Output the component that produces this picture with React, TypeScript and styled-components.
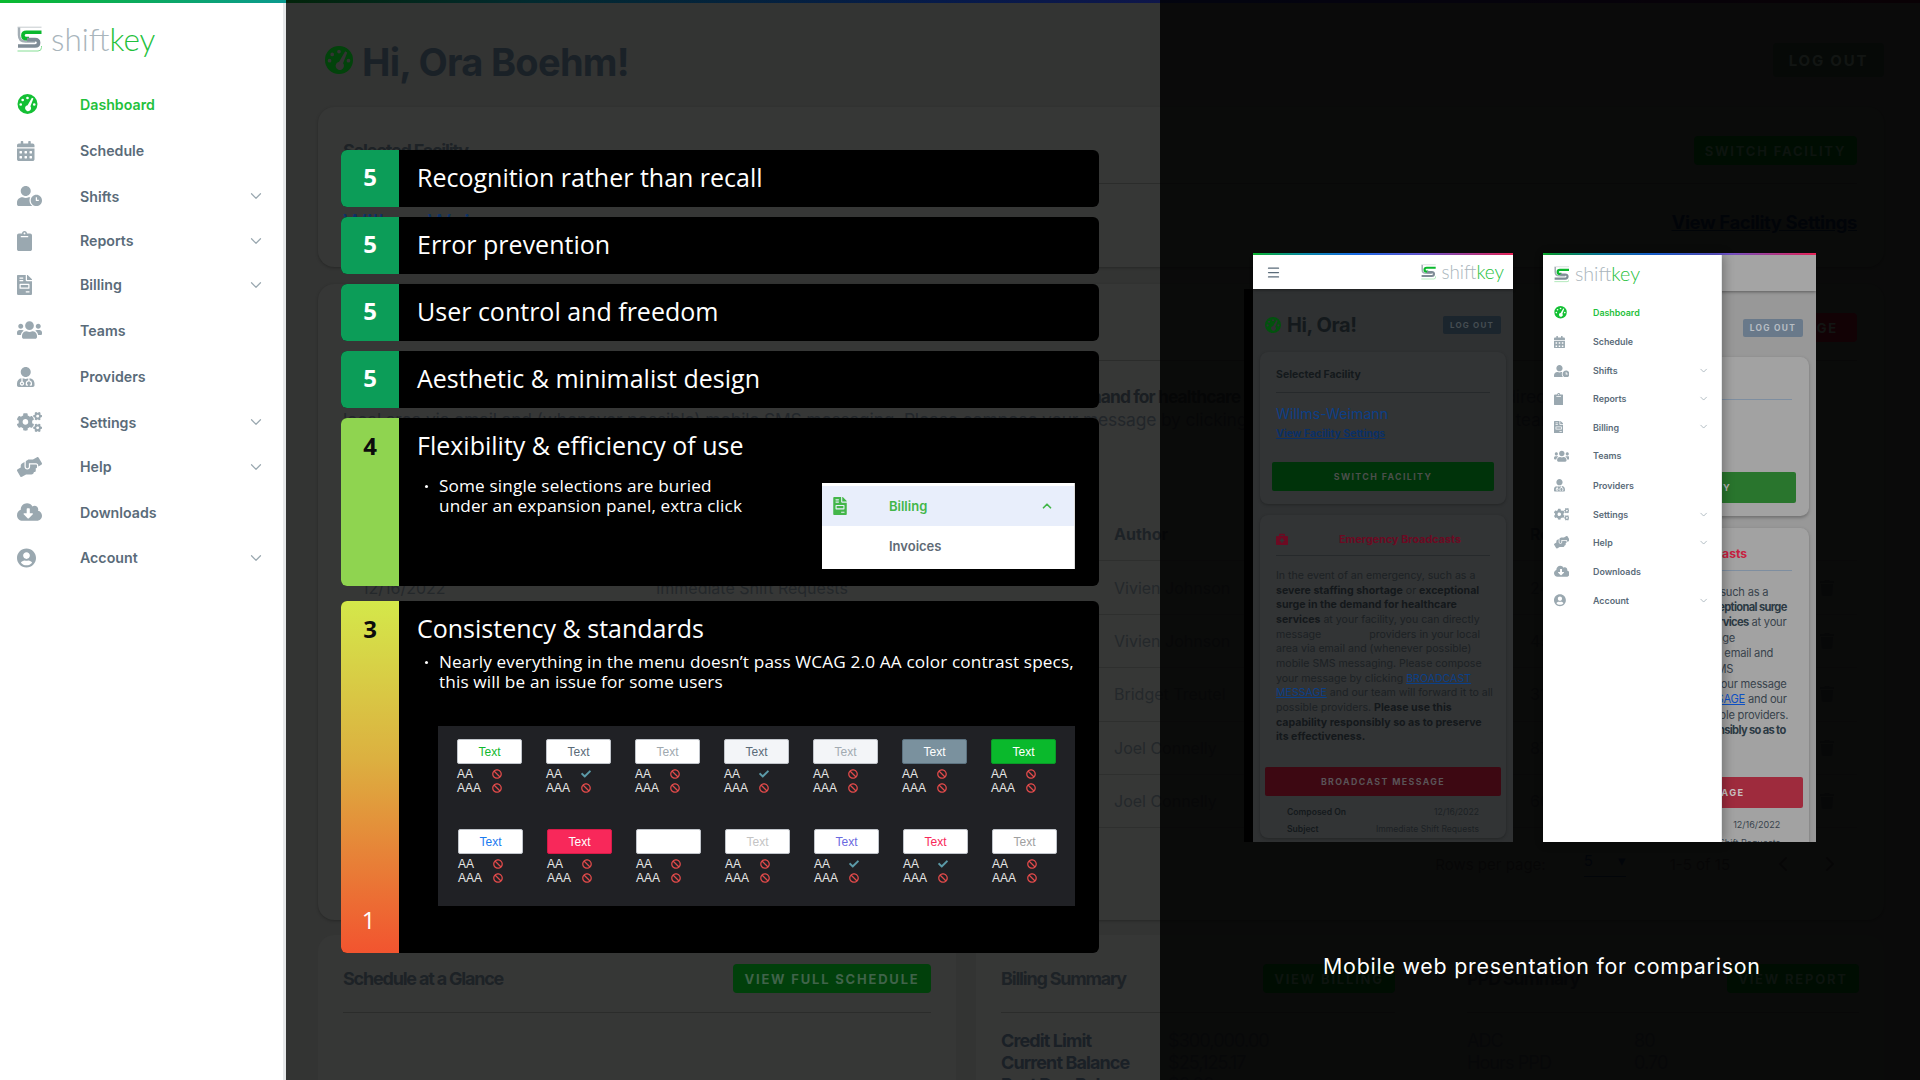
import React from "react";
import styled, { createGlobalStyle, ThemeProvider } from "styled-components";
import {
  FaBan,
  FaBriefcaseMedical,
  FaCalendarAlt,
  FaCheck,
  FaClipboard,
  FaCloudDownloadAlt,
  FaCogs,
  FaFileInvoice,
  FaHandsHelping,
  FaTrash,
  FaUserCircle,
  FaUserClock,
  FaUserMd,
  FaUsers,
} from "react-icons/fa";
import { ChevronDown, ChevronLeft, ChevronRight, ChevronUp, Menu } from "lucide-react";

const SANS = `Inter, "Liberation Sans", sans-serif`;
const SLIDE = `"Open Sans", "Noto Sans", sans-serif`;
const STRIPE = `linear-gradient(90deg, #0bba2f 0%, #0a8fb0 20%, #1b6ff0 40%, #6a5ad8 65%, #f0245a 100%)`;
const DIM_STRIPE = `linear-gradient(90deg, #02240a 0%, #022a2f 15%, #061a4a 40%, #15124a 65%, #30081a 100%)`;

const lowTheme = {
  zoom: 1,
  backing: "-9px 0 0 #000",
  header: "#ffffff",
  page: "#2f3132",
  card: "#323435",
  rule: "#26292b",
  heading: "#14191c",
  body: "#1c2124",
  strong: "#14181b",
  link: "#0c3f86",
  linkStrong: "#0a3068",
  green: "#00330a",
  greenText: "#4c4f4c",
  red: "#3d0812",
  redText: "#5a5458",
  logout: "#1b252d",
  logoutText: "#454d52",
  danger: "#6c0a22",
  dangerOffset: 34,
  dangerSize: 10.8,
  copyTrack: 0,
  boldTrack: 0,
};

const midTheme = {
  zoom: 1.05,
  backing: "none",
  header: "#a4a4a4",
  page: "#989898",
  card: "#a2a2a2",
  rule: "#7e8ea0",
  heading: "#2c3a44",
  body: "#38434c",
  strong: "#2c3a44",
  link: "#0e50c4",
  linkStrong: "#0e50c4",
  green: "#29752d",
  greenText: "#b4b4b4",
  red: "#9e2b3d",
  redText: "#c8c0c0",
  logout: "#69798a",
  logoutText: "#b8bec4",
  danger: "#c7203f",
  dangerOffset: -2,
  dangerSize: 11.6,
  copyTrack: -0.2,
  boldTrack: -0.62,
};

const GlobalStyle = createGlobalStyle`
  html, body {
    margin: 0;
    padding: 0;
    background: #333433;
  }
  * {
    box-sizing: border-box;
  }
`;

const Page = styled.div`
  position: relative;
  display: flex;
  width: 1920px;
  height: 1080px;
  overflow: hidden;
  font-family: ${SANS};
`;

/* ---------- logo ---------- */

const LogoWrap = styled.div<{ $zoom?: number }>`
  display: flex;
  align-items: center;
  gap: 9px;
  zoom: ${(p) => p.$zoom ?? 1};
`;

const LogoWord = styled.span`
  font-family: Lato, "Open Sans", sans-serif;
  font-weight: 300;
  font-size: 31.5px;
  line-height: 26px;
  color: #a9b5bc;

  b {
    font-weight: 300;
    color: #1fc13c;
  }
`;

const Logo = ({ zoom }: { zoom?: number }) => (
  <LogoWrap $zoom={zoom}>
    <svg width="25" height="26" viewBox="0 0 25 26" fill="none">
      <path d="M0.5 1.2H24.5" stroke="#c5cbce" />
      <path d="M0.5 25H21q3.5 0 3.5-3.5V20" stroke="#86de95" />
      <path d="M2 1.5V9q0 6.5 6.5 6.5H18" stroke="#a4aeb5" strokeWidth="2.5" />
      <path d="M24.5 6.2H9.5q-3.6 0-3.6 3.2t3.6 3.2H12" stroke="#0bb82e" strokeWidth="3.6" />
      <path d="M1 20H18q3.6 0 3.6-3.2T18 13.6H10" stroke="#7f8c96" strokeWidth="3.6" />
    </svg>
    <LogoWord>
      shift<b>key</b>
    </LogoWord>
  </LogoWrap>
);

const GaugeGlyph = styled.svg<{ $size: number; $color: string }>`
  display: block;
  flex: none;
  width: ${(p) => p.$size}px;
  height: ${(p) => p.$size}px;
  fill: ${(p) => p.$color};
`;

const Gauge = ({ size, color }: { size: number; color: string }) => (
  <GaugeGlyph $size={size} $color={color} viewBox="0 0 24 24">
    <path
      fillRule="evenodd"
      d="M12 0a12 12 0 1 0 0 24a12 12 0 1 0 0-24zM12 3.2a1.6 1.6 0 1 1 0 3.2a1.6 1.6 0 1 1 0-3.2zM6.2 5.6a1.6 1.6 0 1 1 0 3.2a1.6 1.6 0 1 1 0-3.2zM3.9 11a1.6 1.6 0 1 1 0 3.2a1.6 1.6 0 1 1 0-3.2zM20.1 11a1.6 1.6 0 1 1 0 3.2a1.6 1.6 0 1 1 0-3.2zM17.3 4.6l1.8 0.9l-3.6 9.2a3.6 3.6 0 1 1-3.4-1.3z"
    />
  </GaugeGlyph>
);

/* ---------- sidebar ---------- */

const Side = styled.aside<{ $drawer?: boolean }>`
  flex: none;
  width: 286px;
  height: 100%;
  background: #fff;
  border-right: 3px solid #e6e8e9;
  zoom: ${(p) => (p.$drawer ? 0.625 : 1)};
`;

const SideStripe = styled.div`
  height: 3px;
  margin-right: -3px;
  background: ${STRIPE};
  background-size: 1920px 3px;
`;

const LogoSlot = styled.div<{ $drawer?: boolean }>`
  height: ${(p) => (p.$drawer ? 68 : 78)}px;
  padding: ${(p) => (p.$drawer ? 18 : 23)}px 0 0 17px;
`;

const NavRow = styled.div<{ $tall: boolean; $drawer?: boolean }>`
  display: flex;
  align-items: center;
  height: ${(p) => (p.$tall ? 46.6 : 44.3) + (p.$drawer ? 0.75 : 0)}px;
  padding: 0 18px 0 17px;
`;

const NavIcon = styled.span<{ $glyph: number }>`
  display: flex;
  align-items: center;
  flex: none;
  width: 63px;
  color: #9aa8b0;

  svg {
    display: block;
    width: ${(p) => p.$glyph}px;
    height: 20px;
  }
`;

const NavLabel = styled.span<{ $active?: boolean }>`
  flex: 1;
  font-size: 14.2px;
  font-weight: 600;
  color: ${(p) => (p.$active ? "#1fc13c" : "#5a6b79")};
`;

const Caret = styled(ChevronDown)`
  flex: none;
  width: 18px;
  height: 18px;
  color: #9aa8b0;
  stroke-width: 1.6;
`;

const NAV = [
  { label: "Dashboard", glyph: 21, icon: <Gauge size={21} color="#14c034" />, active: true },
  { label: "Schedule", glyph: 17.5, icon: <FaCalendarAlt /> },
  { label: "Shifts", glyph: 25, icon: <FaUserClock />, more: true },
  { label: "Reports", glyph: 15, icon: <FaClipboard />, more: true },
  { label: "Billing", glyph: 15, icon: <FaFileInvoice />, more: true },
  { label: "Teams", glyph: 25, icon: <FaUsers /> },
  { label: "Providers", glyph: 17.5, icon: <FaUserMd /> },
  { label: "Settings", glyph: 25, icon: <FaCogs />, more: true },
  { label: "Help", glyph: 25, icon: <FaHandsHelping />, more: true },
  { label: "Downloads", glyph: 25, icon: <FaCloudDownloadAlt /> },
  { label: "Account", glyph: 19, icon: <FaUserCircle />, more: true },
];

const Sidebar = ({ drawer }: { drawer?: boolean }) => (
  <Side $drawer={drawer}>
    {!drawer && <SideStripe />}
    <LogoSlot $drawer={drawer}>
      <Logo />
    </LogoSlot>
    {NAV.map((item) => (
      <NavRow key={item.label} $tall={!item.more} $drawer={drawer}>
        <NavIcon $glyph={item.glyph}>{item.icon}</NavIcon>
        <NavLabel $active={item.active}>{item.label}</NavLabel>
        {item.more && <Caret />}
      </NavRow>
    ))}
  </Side>
);

/* ---------- dashboard behind the slide ---------- */

const Main = styled.main`
  position: relative;
  flex: 1;
  min-width: 0;
  padding: 0 36px 0 32px;
  color: #1d2226;
`;

const MainStripe = styled.div`
  height: 3px;
  margin: 0 -36px 40px -32px;
  background: ${DIM_STRIPE};
  background-size: 1634px 3px;
`;

const Veil = styled.div`
  position: absolute;
  top: 0;
  right: 0;
  bottom: 0;
  left: 874px;
  background: rgba(0, 0, 0, 0.8);
`;

const Greeting = styled.header`
  display: flex;
  align-items: center;
  height: 34px;
  padding-left: 7px;
`;

const Hello = styled.h1`
  flex: 1;
  margin: 3px 0 0 9px;
  font-size: 38px;
  font-weight: 700;
  letter-spacing: -0.7px;
  color: #1a2127;
`;

const ActionButton = styled.div<{ $tone: "green" | "red" | "ink"; $width: number }>`
  display: flex;
  align-items: center;
  justify-content: center;
  flex: none;
  width: ${(p) => p.$width}px;
  height: ${(p) => (p.$tone === "ink" ? 34 : 29)}px;
  border-radius: 4px;
  font-size: ${(p) => (p.$tone === "ink" ? 15 : 13)}px;
  font-weight: 700;
  letter-spacing: 1.8px;
  white-space: nowrap;
  background: ${(p) => (p.$tone === "green" ? "#01400b" : p.$tone === "red" ? "#5a0a1c" : "#1f2e24")};
  color: ${(p) => (p.$tone === "green" ? "#40634a" : "#5a6a60")};
`;

const Card = styled.section<{ $height: number; $top?: number; $bottom?: number }>`
  height: ${(p) => p.$height}px;
  margin-top: ${(p) => p.$top ?? 0}px;
  margin-bottom: ${(p) => p.$bottom ?? 15}px;
  padding: 0 27px 0 25px;
  border-radius: 16px;
  background: #363736;
  box-shadow: 0 1px 3px rgba(0, 0, 0, 0.25);
`;

const CardHead = styled.div`
  display: flex;
  align-items: center;
  justify-content: space-between;
  height: 77px;
  padding-top: 11px;
  border-bottom: 1px solid #2b2c2b;
`;

const CardTitle = styled.h2`
  margin: 0;
  font-size: 18px;
  font-weight: 700;
  letter-spacing: -1.2px;
  color: #1d2226;
`;

const FacilityRow = styled.div`
  display: flex;
  align-items: flex-start;
  justify-content: space-between;
  margin-top: 25px;
`;

const FacilityName = styled.span`
  font-size: 24px;
  color: #0b3268;
`;

const FacilityLink = styled.a`
  margin-top: 2px;
  font-size: 18.5px;
  font-weight: 700;
  letter-spacing: -0.4px;
  text-decoration: underline;
  color: #08142c;
`;

const Lede = styled.p`
  margin: 24px 0 0;
  font-size: 17.4px;
  line-height: 23px;
  letter-spacing: -0.15px;
  white-space: nowrap;
  color: #22262a;

  b {
    font-weight: 700;
    letter-spacing: -0.9px;
    color: #1a1e22;
  }
`;

const TableGrid = styled.div<{ $head?: boolean }>`
  display: grid;
  grid-template-columns: 294px 458px 416px 290px 1fr;
  align-items: center;
  height: 53.4px;
  padding-left: 19px;
  border-bottom: 1px solid #2e2f2e;
  font-size: 16px;
  font-weight: ${(p) => (p.$head ? 700 : 400)};
  color: ${(p) => (p.$head ? "#1d2226" : "#24282b")};
  margin-top: ${(p) => (p.$head ? 77 : 0)}px;

  svg {
    display: block;
    width: 14px;
    height: 16px;
  }
`;

const Pager = styled.div`
  display: flex;
  align-items: center;
  justify-content: flex-end;
  height: 72px;
  font-size: 15px;
  color: #222;
`;

const PagerSelect = styled.span`
  display: flex;
  justify-content: space-between;
  width: 42px;
  margin: 0 44px 0 38px;
  padding-bottom: 6px;
  border-bottom: 1px solid #0a1a30;
  color: #0a1a30;
`;

const PagerNav = styled.span`
  display: flex;
  gap: 23px;
  margin: 0 15px 0 41px;
`;

const LowerRow = styled.div`
  display: flex;
  gap: 20px;
`;

const LowerCard = styled.section<{ $flex: number }>`
  flex: ${(p) => p.$flex};
  height: 200px;
  padding: 0 25px;
  border-radius: 16px 16px 0 0;
  background: #363736;
`;

const SummaryCols = styled.div`
  display: grid;
  grid-template-columns: 394px 392px;
  column-gap: 72px;
`;

const SummaryHead = styled.div`
  display: flex;
  align-items: center;
  justify-content: space-between;
  height: 78px;
  padding-top: 29px;
  padding-bottom: 19px;
  border-bottom: 1px solid #2b2c2b;
`;

const SummaryRow = styled.div`
  display: grid;
  grid-template-columns: 167px 1fr;
  height: 22px;
  font-size: 18px;
  line-height: 22px;
  letter-spacing: -0.9px;
  white-space: nowrap;

  ${SummaryHead} + & {
    margin-top: 17px;
  }

  b {
    font-weight: 700;
    color: #1a2026;
  }

  span {
    color: #252a2d;
  }
`;

const ROWS = [
  ["12/16/2022", "Immediate Shift Requests", "Vivien Johnson", "24"],
  ["12/16/2022", "Immediate Shift Requests", "Vivien Johnson", "45"],
  ["12/15/2022", "Immediate Shift Requests", "Bridget Treutel", "31"],
  ["12/14/2022", "Immediate Shift Requests", "Joel Connelly", "87"],
  ["12/14/2022", "Immediate Shift Requests", "Joel Connelly", "66"],
];

const Dashboard = () => (
  <Main>
    <MainStripe />
    <Greeting>
      <Gauge size={28} color="#02430b" />
      <Hello>Hi, Ora Boehm!</Hello>
      <ActionButton $tone="ink" $width={111}>
        LOG OUT
      </ActionButton>
    </Greeting>
    <Card $height={160} $top={30} $bottom={17}>
      <CardHead>
        <CardTitle>Selected Facility</CardTitle>
        <ActionButton $tone="green" $width={163}>
          SWITCH FACILITY
        </ActionButton>
      </CardHead>
      <FacilityRow>
        <FacilityName>Willms-Weimann</FacilityName>
        <FacilityLink>View Facility Settings</FacilityLink>
      </FacilityRow>
    </Card>
    <Card $height={636}>
      <CardHead>
        <CardTitle>Emergency Broadcasts</CardTitle>
        <ActionButton $tone="red" $width={217}>
          BROADCAST MESSAGE
        </ActionButton>
      </CardHead>
      <Lede>
        In the event of an emergency, such as a <b>severe staffing shortage</b> or <b>exceptional surge in the demand for healthcare services</b> at your facility, you can directly
        <br />
        local area via email and (whenever possible) mobile SMS messaging. Please compose your message by clicking BROADCAST MESSAGE and our team
      </Lede>
      <TableGrid $head>
        <span>Composed On</span>
        <span>Subject</span>
        <span>Author</span>
        <span>Recipients</span>
        <span />
      </TableGrid>
      {ROWS.map((row, i) => (
        <TableGrid key={i}>
          {row.map((cell, j) => (
            <span key={j}>{cell}</span>
          ))}
          <FaTrash />
        </TableGrid>
      ))}
      <Pager>
        Rows per page:
        <PagerSelect>
          5<span>▾</span>
        </PagerSelect>
        1-5 of 15
        <PagerNav>
          <ChevronLeft size={24} />
          <ChevronRight size={24} />
        </PagerNav>
      </Pager>
    </Card>
    <LowerRow>
      <LowerCard $flex={637}>
        <SummaryHead>
          <CardTitle>Schedule at a Glance</CardTitle>
          <ActionButton $tone="green" $width={198}>
            VIEW FULL SCHEDULE
          </ActionButton>
        </SummaryHead>
      </LowerCard>
      <LowerCard $flex={909}>
        <SummaryCols>
          <div>
            <SummaryHead>
              <CardTitle>Billing Summary</CardTitle>
              <ActionButton $tone="green" $width={132}>
                VIEW BILLING
              </ActionButton>
            </SummaryHead>
            <SummaryRow>
              <b>Credit Limit</b>
              <span>$300,000.00</span>
            </SummaryRow>
            <SummaryRow>
              <b>Current Balance</b>
              <span>$25,125.17</span>
            </SummaryRow>
            <SummaryRow>
              <b>Past Due Balance</b>
              <span>$0.00</span>
            </SummaryRow>
          </div>
          <div>
            <SummaryHead>
              <CardTitle>PPD Summary</CardTitle>
              <ActionButton $tone="green" $width={132}>
                VIEW REPORT
              </ActionButton>
            </SummaryHead>
            <SummaryRow>
              <span>ADC</span>
              <span>80</span>
            </SummaryRow>
            <SummaryRow>
              <span>Hours PPD</span>
              <span>0.70</span>
            </SummaryRow>
          </div>
        </SummaryCols>
      </LowerCard>
    </LowerRow>
    <Veil />
  </Main>
);

/* ---------- heuristic scores ---------- */

const Scores = styled.div`
  position: absolute;
  top: 150px;
  left: 341px;
  display: flex;
  flex-direction: column;
  gap: 10px;
  width: 758px;
  font-family: ${SLIDE};
  color: #fff;
`;

const ScoreRow = styled.div<{ $height: number; $gapTop?: number }>`
  display: flex;
  height: ${(p) => p.$height}px;
  margin-top: ${(p) => p.$gapTop ?? 0}px;
  border-radius: 6px;
  overflow: hidden;
  background: #000;
`;

const Badge = styled.div<{ $fill: string; $ink: string; $spread?: boolean }>`
  display: flex;
  flex-direction: column;
  align-items: center;
  justify-content: ${(p) => (p.$spread ? "space-between" : "center")};
  flex: none;
  width: 58px;
  padding: ${(p) => (p.$spread ? "12px 0 17px" : "0 0 3px")};
  background: ${(p) => p.$fill};
  color: ${(p) => p.$ink};
  font-size: 24px;
  font-weight: 700;
  line-height: 32px;
`;

const BottomDigit = styled.span`
  margin-right: 3px;
  font-weight: 500;
  color: #fff;
`;

const ScoreBody = styled.div`
  flex: 1;
  min-width: 0;
  padding: 11px 24px 0 18px;
`;

const ScoreHeading = styled.h3`
  display: flex;
  align-items: center;
  margin: 0;
  font-size: 25px;
  font-weight: 400;
  line-height: 32px;
  white-space: nowrap;
`;

const ShortHeading = styled(ScoreHeading)`
  flex: 1;
  padding: 0 0 3px 18px;
`;

const DetailRow = styled.div`
  display: flex;
  justify-content: space-between;
  margin-top: 15px;
`;

const BulletItem = styled.div<{ $top?: number }>`
  display: flex;
  margin-top: ${(p) => p.$top ?? 0}px;
  font-size: 17.2px;
  line-height: 20px;
  letter-spacing: 0.14px;
  white-space: nowrap;
`;

const BulletDot = styled.i`
  flex: none;
  width: 3px;
  height: 3px;
  margin: 9px 11px 0 8px;
  border-radius: 50%;
  background: #fff;
`;

const MenuCrop = styled.div`
  flex: none;
  width: 253px;
  height: 86px;
  margin-top: 7px;
  padding-top: 3px;
  background: #fff;
  border-right: 1px solid #dcdcdc;
  font-family: ${SANS};
`;

const CropRow = styled.div<{ $open?: boolean }>`
  display: flex;
  align-items: center;
  height: 40px;
  padding: 0 20px 0 11px;
  background: ${(p) => (p.$open ? "#e8eefb" : "transparent")};

  svg:first-child {
    width: 14px;
    height: 18px;
    color: #43b649;
  }
`;

const CropLabel = styled.span<{ $open?: boolean }>`
  flex: 1;
  padding-left: ${(p) => (p.$open ? 42 : 56)}px;
  font-size: 13px;
  font-weight: 600;
  color: ${(p) => (p.$open ? "#43b649" : "#5f6b76")};
`;

const Contrast = styled.div`
  display: flex;
  flex-direction: column;
  gap: 34px;
  width: 637px;
  height: 180px;
  margin: 34px 0 0 21px;
  padding: 13px 0 0 19px;
  background: #202125;
  font-family: "Liberation Sans", Arial, sans-serif;
`;

const ContrastLine = styled.div`
  display: flex;
  gap: 24px;

  & + & {
    margin-left: 1px;
  }
`;

const Sample = styled.div`
  width: 65px;
`;

const Chip = styled.div<{ $bg: string; $fg: string; $edge?: string }>`
  display: flex;
  align-items: center;
  justify-content: center;
  height: 25px;
  border: 1px solid ${(p) => p.$edge ?? "#c0c4ca"};
  border-radius: 2px;
  background: ${(p) => p.$bg};
  color: ${(p) => p.$fg};
  font-size: 12px;
`;

const Grade = styled.div`
  display: grid;
  grid-template-columns: 35px 10px;
  align-items: center;
  height: 14px;
  font-size: 12px;
  color: #e6e6e6;

  ${Chip} + & {
    margin-top: 3px;
  }

  svg {
    display: block;
    width: 10px;
    height: 10px;
  }
`;

const CHIPS = [
  [
    { bg: "#fff", fg: "#10b92e", pass: false },
    { bg: "#fff", fg: "#5a6b78", pass: true },
    { bg: "#fff", fg: "#a0a9af", pass: false },
    { bg: "#f3f5f8", fg: "#5a6b78", pass: true },
    { bg: "#f3f5f8", fg: "#a2abb2", pass: false },
    { bg: "#7a919e", fg: "#fff", edge: "#5c7280", pass: false },
    { bg: "#0ab92c", fg: "#fff", edge: "#0a9a28", pass: false },
  ],
  [
    { bg: "#fff", fg: "#1a7bf0", pass: false },
    { bg: "#f8285a", fg: "#fff", edge: "#d81a48", pass: false },
    { bg: "#fff", fg: "#fff", pass: false, blank: true },
    { bg: "#fff", fg: "#c4c4c4", pass: false },
    { bg: "#fff", fg: "#6a6ae0", pass: true },
    { bg: "#fff", fg: "#f8285a", pass: true },
    { bg: "#fff", fg: "#a0a0a0", pass: false },
  ],
];

const Verdict = ({ pass }: { pass: boolean }) =>
  pass ? <FaCheck color="#5b9aa8" /> : <FaBan color="#e04a4a" />;

const ScorePanel = () => (
  <Scores>
    {["Recognition rather than recall", "Error prevention", "User control and freedom", "Aesthetic & minimalist design"].map(
      (title) => (
        <ScoreRow key={title} $height={57}>
          <Badge $fill="#0c9d58" $ink="#fff">
            5
          </Badge>
          <ShortHeading>{title}</ShortHeading>
        </ScoreRow>
      )
    )}
    <ScoreRow $height={168}>
      <Badge $fill="#8fd450" $ink="#0c0c0c" $spread>
        4
      </Badge>
      <ScoreBody>
        <ScoreHeading>Flexibility &amp; efficiency of use</ScoreHeading>
        <DetailRow>
          <BulletItem>
            <BulletDot />
            <span>
              Some single selections are buried
              <br />
              under an expansion panel, extra click
            </span>
          </BulletItem>
          <MenuCrop>
            <CropRow $open>
              <FaFileInvoice />
              <CropLabel $open>Billing</CropLabel>
              <ChevronUp size={14} color="#43b649" strokeWidth={3} />
            </CropRow>
            <CropRow>
              <CropLabel>Invoices</CropLabel>
            </CropRow>
          </MenuCrop>
        </DetailRow>
      </ScoreBody>
    </ScoreRow>
    <ScoreRow $height={352} $gapTop={5}>
      <Badge $fill="linear-gradient(180deg, #d4e84a 0%, #dcb040 45%, #f2542f 100%)" $ink="#0c0c0c" $spread>
        <span>3</span>
        <BottomDigit>1</BottomDigit>
      </Badge>
      <ScoreBody>
        <ScoreHeading>Consistency &amp; standards</ScoreHeading>
        <BulletItem $top={8}>
          <BulletDot />
          <span>
            Nearly everything in the menu doesn’t pass WCAG 2.0 AA color contrast specs,
            <br />
            this will be an issue for some users
          </span>
        </BulletItem>
        <Contrast>
          {CHIPS.map((line, i) => (
            <ContrastLine key={i}>
              {line.map((chip, j) => (
                <Sample key={j}>
                  <Chip $bg={chip.bg} $fg={chip.fg} $edge={chip.edge}>
                    {"blank" in chip ? "" : "Text"}
                  </Chip>
                  <Grade>
                    AA <Verdict pass={chip.pass} />
                  </Grade>
                  <Grade>
                    AAA <Verdict pass={false} />
                  </Grade>
                </Sample>
              ))}
            </ContrastLine>
          ))}
        </Contrast>
      </ScoreBody>
    </ScoreRow>
  </Scores>
);

/* ---------- mobile comparison ---------- */

const Showcase = styled.div`
  position: absolute;
  top: 253px;
  left: 1253px;
  display: flex;
  flex-direction: column;
  width: 563px;
`;

const Devices = styled.div`
  display: flex;
  justify-content: space-between;
  height: 589px;
`;

const Device = styled.div<{ $width: number }>`
  position: relative;
  display: flex;
  flex-direction: column;
  width: ${(p) => p.$width}px;
`;

const DeviceStripe = styled.div`
  flex: none;
  height: 2px;
  background: ${STRIPE};
`;

const Screen = styled.div`
  display: flex;
  flex-direction: column;
  flex: 1;
  min-height: 0;
  background: ${(p) => p.theme.page};
  zoom: ${(p) => p.theme.zoom};
`;

const MobileBar = styled.div`
  position: relative;
  flex: none;
  display: flex;
  align-items: center;
  justify-content: space-between;
  height: 34px;
  padding: 0 9px 0 13px;
  background: ${(p) => p.theme.header};
  box-shadow: 0 1px 3px rgba(0, 0, 0, 0.4);

  svg:first-child {
    color: #5a6b79;
  }
`;

const MobileBody = styled.div`
  flex: 1;
  min-height: 0;
  overflow: hidden;
  box-shadow: ${(p) => p.theme.backing};
`;

const MobileGreeting = styled.div`
  display: flex;
  align-items: center;
  height: 17px;
  margin: 27px 12px 19px;
`;

const MobileHello = styled.span`
  flex: 1;
  margin-left: 6px;
  font-size: 20px;
  font-weight: 700;
  letter-spacing: -0.4px;
  color: ${(p) => p.theme.heading};
`;

const LogoutChip = styled.span`
  display: flex;
  align-items: center;
  justify-content: center;
  width: 58px;
  height: 18px;
  border-radius: 2px;
  background: ${(p) => p.theme.logout};
  color: ${(p) => p.theme.logoutText};
  font-size: 8px;
  font-weight: 700;
  letter-spacing: 1.2px;
`;

const MobileCard = styled.div<{ $height?: number }>`
  height: ${(p) => (p.$height ? `${p.$height}px` : "auto")};
  margin: 0 7px 11px;
  padding: 0 16px;
  border-radius: 8px;
  background: ${(p) => p.theme.card};
  box-shadow: 0 1px 3px rgba(0, 0, 0, 0.25);
`;

const MobileHead = styled.div<{ $danger?: boolean }>`
  position: relative;
  display: flex;
  align-items: center;
  justify-content: ${(p) => (p.$danger ? "center" : "flex-start")};
  height: 41px;
  padding-top: ${(p) => (p.$danger ? 8 : 5)}px;
  border-bottom: 1px solid ${(p) => p.theme.rule};
  font-size: 10.5px;
  font-weight: 700;
  color: ${(p) => (p.$danger ? p.theme.danger : p.theme.heading)};
`;

const DangerTitle = styled.span`
  font-size: ${(p) => p.theme.dangerSize}px;
  margin-left: ${(p) => p.theme.dangerOffset}px;
`;

const DangerIcon = styled(FaBriefcaseMedical)`
  position: absolute;
  left: 0;
  width: 12px;
  height: 12px;
  color: ${(p) => p.theme.danger};
`;

const MobileFacility = styled.div`
  margin-top: 13px;
  font-size: 14.2px;
  line-height: 16px;
  color: ${(p) => p.theme.link};
`;

const MobileLink = styled.a`
  display: block;
  margin-top: 5px;
  font-size: 10.4px;
  font-weight: 700;
  line-height: 14px;
  text-decoration: underline;
  color: ${(p) => p.theme.linkStrong};
`;

const MobileAction = styled.div<{ $red?: boolean }>`
  display: flex;
  align-items: center;
  justify-content: center;
  height: 29px;
  border-radius: 2px;
  margin: ${(p) => (p.$red ? "22px -11px 0" : "21px -4px 0")};
  background: ${(p) => (p.$red ? p.theme.red : p.theme.green)};
  color: ${(p) => (p.$red ? p.theme.redText : p.theme.greenText)};
  font-size: 8.8px;
  font-weight: 700;
  letter-spacing: 1.4px;
`;

const MobileCopy = styled.p`
  margin: 13px 0 0;
  font-size: 10.6px;
  line-height: 14.67px;
  letter-spacing: ${(p) => p.theme.copyTrack}px;
  white-space: nowrap;
  color: ${(p) => p.theme.body};

  b {
    font-weight: 700;
    letter-spacing: ${(p) => p.theme.boldTrack}px;
    color: ${(p) => p.theme.strong};
  }

  u {
    color: ${(p) => p.theme.link};
  }
`;

const CopyGap = styled.span`
  display: inline-block;
  width: 42px;
`;

const MobileFact = styled.div`
  display: flex;
  justify-content: space-between;
  height: 17px;
  padding: 0 11px;
  font-size: 8.6px;
  line-height: 17px;
  color: ${(p) => p.theme.body};

  b {
    font-weight: 600;
    color: ${(p) => p.theme.heading};
  }

  ${MobileAction} + & {
    margin-top: 8px;
  }
`;

const Drawer = styled.div`
  position: absolute;
  top: 2px;
  bottom: 0;
  left: 0;
  width: 179px;
  box-shadow: 2px 0 10px rgba(0, 0, 0, 0.3);
`;

const Caption = styled.div`
  margin: 111px 0 0 70px;
  font-size: 21.4px;
  line-height: 26px;
  letter-spacing: 0.76px;
  white-space: nowrap;
  color: #fff;
`;

const MobileScreen = ({ brand, copy }: { brand?: boolean; copy: React.ReactNode }) => (
  <Screen>
    <MobileBar>
      <Menu size={15} />
      {brand && <Logo zoom={0.6} />}
    </MobileBar>
    <MobileBody>
      <MobileGreeting>
        <Gauge size={16} color="#02520e" />
        <MobileHello>Hi, Ora!</MobileHello>
        <LogoutChip>LOG OUT</LogoutChip>
      </MobileGreeting>
      <MobileCard $height={152}>
        <MobileHead>Selected Facility</MobileHead>
        <MobileFacility>Willms-Weimann</MobileFacility>
        <MobileLink>View Facility Settings</MobileLink>
        <MobileAction>SWITCH FACILITY</MobileAction>
      </MobileCard>
      <MobileCard>
        <MobileHead $danger>
          <DangerIcon />
          <DangerTitle>Emergency Broadcasts</DangerTitle>
        </MobileHead>
        <MobileCopy>{copy}</MobileCopy>
        <MobileAction $red>BROADCAST MESSAGE</MobileAction>
        <MobileFact>
          <b>Composed On</b>
          <span>12/16/2022</span>
        </MobileFact>
        <MobileFact>
          <b>Subject</b>
          <span>Immediate Shift Requests</span>
        </MobileFact>
      </MobileCard>
    </MobileBody>
  </Screen>
);

const NARROW_COPY = (
  <>
    In the event of an emergency, such as a<br />
    <b>severe staffing shortage</b> or <b>exceptional</b>
    <br />
    <b>surge in the demand for healthcare</b>
    <br />
    <b>services</b> at your facility, you can directly
    <br />
    message <CopyGap /> providers in your local
    <br />
    area via email and (whenever possible)
    <br />
    mobile SMS messaging. Please compose
    <br />
    your message by clicking <u>BROADCAST</u>
    <br />
    <u>MESSAGE</u> and our team will forward it to all
    <br />
    possible providers. <b>Please use this</b>
    <br />
    <b>capability responsibly so as to preserve</b>
    <br />
    <b>its effectiveness.</b>
  </>
);

const WIDE_COPY = (
  <>
    In the event of an emergency, such as a<br />
    <b>severe staffing shortage</b> or <b>exceptional surge</b>
    <br />
    <b>in the demand for healthcare services</b> at your
    <br />
    facility, you can directly message
    <br />
    providers in your local area via email and
    <br />
    (whenever possible) mobile SMS
    <br />
    messaging. Please compose your message
    <br />
    by clicking <u>BROADCAST MESSAGE</u> and our
    <br />
    team will forward it to all possible providers.
    <br />
    <b>Please use this capability responsibly so as to</b>
    <br />
    <b>preserve its effectiveness.</b>
  </>
);

const Comparison = () => (
  <Showcase>
    <Devices>
      <Device $width={260}>
        <DeviceStripe />
        <ThemeProvider theme={lowTheme}>
          <MobileScreen brand copy={NARROW_COPY} />
        </ThemeProvider>
      </Device>
      <Device $width={273}>
        <DeviceStripe />
        <ThemeProvider theme={midTheme}>
          <MobileScreen copy={WIDE_COPY} />
        </ThemeProvider>
        <Drawer>
          <Sidebar drawer />
        </Drawer>
      </Device>
    </Devices>
    <Caption>Mobile web presentation for comparison</Caption>
  </Showcase>
);

export default function App() {
  return (
    <Page>
      <GlobalStyle />
      <Sidebar />
      <Dashboard />
      <ScorePanel />
      <Comparison />
    </Page>
  );
}
